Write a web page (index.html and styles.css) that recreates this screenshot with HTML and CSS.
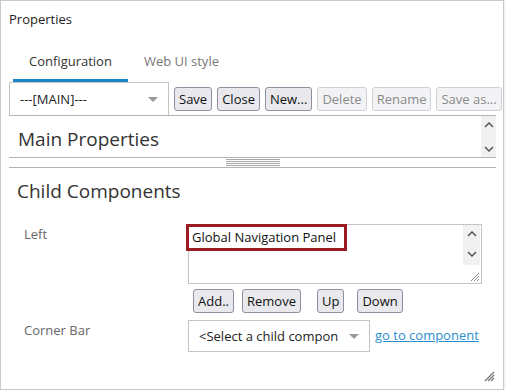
FILE: index.html
```html
<!DOCTYPE html>
<html lang="en">
<head>
    <meta charset="UTF-8">
    <title>Properties</title>
    <link rel="stylesheet" href="styles.css">
</head>
<body>
<div class="panel">
    <div class="panel-title">Properties</div>

    <div class="tabs">
        <div class="tab active">Configuration</div>
        <div class="tab">Web UI style</div>
    </div>

    <div class="toolbar">
        <div class="dropdown config-select">
            <span class="dropdown-text">---[MAIN]---</span>
            <span class="caret"></span>
        </div>
        <button class="btn">Save</button>
        <button class="btn">Close</button>
        <button class="btn">New...</button>
        <button class="btn" disabled>Delete</button>
        <button class="btn" disabled>Rename</button>
        <button class="btn" disabled>Save as...</button>
    </div>

    <div class="main-props">
        <div class="section-title">Main Properties</div>
        <div class="scrollbar">
            <svg width="10" height="6" viewBox="0 0 10 6"><path d="M1 5 L5 1 L9 5" fill="none" stroke="#555" stroke-width="1.5"/></svg>
            <svg width="10" height="6" viewBox="0 0 10 6"><path d="M1 1 L5 5 L9 1" fill="none" stroke="#555" stroke-width="1.5"/></svg>
        </div>
    </div>

    <div class="splitter"><div class="grip"></div></div>

    <div class="child-section">
        <div class="section-title">Child Components</div>

        <div class="field-row">
            <div class="field-label">Left</div>
            <div class="field-control">
                <div class="listbox">
                    <div class="list-item selected">Global Navigation Panel</div>
                    <div class="list-scroll">
                        <svg width="10" height="6" viewBox="0 0 10 6"><path d="M1 5 L5 1 L9 5" fill="none" stroke="#555" stroke-width="1.5"/></svg>
                        <svg width="10" height="6" viewBox="0 0 10 6"><path d="M1 1 L5 5 L9 1" fill="none" stroke="#555" stroke-width="1.5"/></svg>
                    </div>
                    <svg class="list-resize" width="10" height="10" viewBox="0 0 10 10">
                        <path d="M9 1 L1 9 M9 4 L4 9 M9 7 L7 9" stroke="#888" stroke-width="1"/>
                    </svg>
                </div>
                <div class="list-buttons">
                    <button class="btn">Add..</button>
                    <button class="btn">Remove</button>
                    <button class="btn btn-up">Up</button>
                    <button class="btn btn-down">Down</button>
                </div>
            </div>
        </div>

        <div class="field-row corner-row">
            <div class="field-label">Corner Bar</div>
            <div class="field-control inline">
                <div class="dropdown child-select">
                    <span class="dropdown-text">&lt;Select a child compon</span>
                    <span class="caret"></span>
                </div>
                <a href="#" class="link">go to component</a>
            </div>
        </div>
    </div>

    <svg class="panel-resize" width="12" height="12" viewBox="0 0 12 12">
        <path d="M11 2 L2 11 M11 5 L5 11 M11 8 L8 11" stroke="#777" stroke-width="1.2"/>
    </svg>
</div>
</body>
</html>
```

FILE: styles.css
```css
body {
    margin: 0;
    font-family: "Open Sans", "Noto Sans", sans-serif;
    font-size: 13px;
    color: #222;
    background: #fff;
}
.panel {
    position: relative;
    width: 504px;
    height: 390px;
    box-sizing: border-box;
    border: 1px solid #c9c9c9;
    padding: 0 7px 0 8px;
    box-shadow: 1px 1px 2px rgba(0, 0, 0, 0.08);
}
.panel-title {
    padding-top: 9px;
    line-height: 18px;
    color: #222;
}
.tabs {
    display: flex;
    margin-top: 14px;
    padding-left: 4px;
}
.tab {
    padding: 1px 16px 0;
    height: 36px;
    line-height: 37px;
    border-bottom: 3px solid transparent;
    color: #777;
}
.tab.active {
    color: #333;
    border-bottom-color: #1b87c9;
}
.toolbar {
    display: flex;
    align-items: center;
    gap: 5px;
    white-space: nowrap;
}
.dropdown {
    display: flex;
    align-items: center;
    justify-content: space-between;
    box-sizing: border-box;
    border: 1px solid #c4c4c4;
    background: #fff;
    flex-shrink: 0;
}
.config-select {
    width: 160px;
    height: 33px;
    padding: 0 10px 0 10px;
    border-bottom: none;
}
.caret {
    width: 0;
    height: 0;
    border-left: 5px solid transparent;
    border-right: 5px solid transparent;
    border-top: 5px solid #999;
}
.btn {
    font-family: inherit;
    font-size: 13px;
    height: 24px;
    padding: 0 4px;
    border: 1px solid #8f8f9d;
    border-radius: 3px;
    background: #e9e9ed;
    color: #111;
    flex-shrink: 0;
    white-space: nowrap;
}
.btn:disabled {
    border-color: #cfcfd6;
    background: #f3f3f5;
    color: #8a8a8a;
}
.main-props {
    display: flex;
    justify-content: space-between;
    height: 41px;
    border-top: 1px solid #b4b4b4;
    border-bottom: 1px solid #b4b4b4;
}
.section-title {
    font-size: 19px;
    color: #333;
    line-height: 26px;
    padding-left: 9px;
}
.main-props .section-title {
    padding-top: 10px;
}
.scrollbar {
    width: 15px;
    background: #f1f1f1;
    display: flex;
    flex-direction: column;
    justify-content: space-between;
    align-items: center;
    padding: 6px 0 5px;
}
.splitter {
    height: 8px;
    border-bottom: 1px solid #b4b4b4;
    display: flex;
    justify-content: center;
    padding-top: 1px;
}
.grip {
    width: 54px;
    height: 7px;
    background: repeating-linear-gradient(to bottom, #a8a8a8 0, #a8a8a8 1px, transparent 1px, transparent 2px);
}
.child-section .section-title {
    padding-top: 10px;
    padding-left: 8px;
}
.field-row {
    display: flex;
    margin-top: 20px;
}
.field-label {
    width: 164px;
    padding-left: 15px;
    padding-top: 1px;
    color: #666;
}
.listbox {
    position: relative;
    width: 294px;
    height: 60px;
    box-sizing: border-box;
    border: 1px solid #c4c4c4;
    display: flex;
    justify-content: space-between;
}
.list-item.selected {
    margin: -1px 0 0 -3px;
    height: 21px;
    line-height: 21px;
    padding: 0 8px 0 3px;
    border: 3px solid #9b1b23;
    color: #111;
    font-size: 13px;
}
.list-scroll {
    width: 17px;
    height: 40px;
    margin-right: 1px;
    background: #f1f1f1;
    display: flex;
    flex-direction: column;
    justify-content: space-between;
    align-items: center;
    padding: 6px 0 8px;
    box-sizing: border-box;
}
.list-resize {
    position: absolute;
    right: 1px;
    bottom: 1px;
}
.list-buttons {
    display: flex;
    gap: 8px;
    margin-top: 5px;
    padding-left: 5px;
}
.list-buttons .btn-up {
    margin-left: 8px;
}
.list-buttons .btn-down {
    margin-left: 5px;
}
.corner-row {
    margin-top: 7px;
}
.field-row.corner-row .field-label {
    padding-top: 1px;
}
.field-control.inline {
    display: flex;
    align-items: center;
    gap: 5px;
}
.child-select {
    width: 182px;
    height: 32px;
    padding: 0 10px 0 10px;
}
.link {
    color: #2a8fd0;
    margin-top: -2px;
}
.panel-resize {
    position: absolute;
    right: 8px;
    bottom: 7px;
}
```
